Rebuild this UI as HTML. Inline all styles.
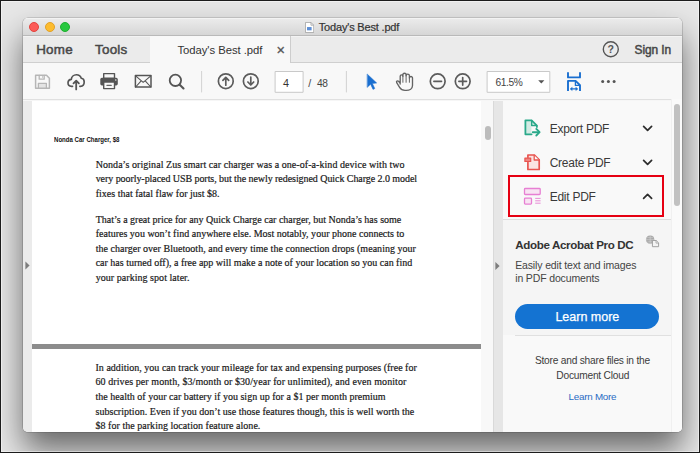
<!DOCTYPE html>
<html><head><meta charset="utf-8">
<style>
*{margin:0;padding:0;box-sizing:border-box}
html,body{width:700px;height:453px;overflow:hidden}
body{position:relative;font-family:"Liberation Sans",sans-serif;background:#e6e6e6;color:#333}
.abs{position:absolute}
#frame{position:absolute;left:0;top:0;width:700px;height:453px;border:1px solid #1c1c1c;z-index:50;pointer-events:none}
#frame::after{content:"";position:absolute;left:0;top:0;right:0;bottom:0;border:1px solid rgba(255,255,255,.45)}
#bg{position:absolute;left:0;top:0;width:700px;height:453px;background:#e7e7e7}
#win{position:absolute;left:23px;top:18px;width:659px;height:414px;border-radius:5px;overflow:hidden;background:#f6f6f6;box-shadow:0 0 0 0.6px rgba(0,0,0,.24),0 18px 32px 0 rgba(0,0,0,.55)}
#title{position:absolute;left:0;top:0;width:659px;height:18px;box-shadow:inset 0 1px 0 #f3f3f3;background:linear-gradient(#ececec,#d6d6d6);border-bottom:1px solid #b9b9b9}
.tl{position:absolute;top:4px;width:10px;height:10px;border-radius:50%}
#tabs{position:absolute;left:0;top:18px;width:659px;height:27.4px;background:#ebebeb;border-bottom:1px solid #cfcfcf;border-top:1px solid #f3f3f3}
#atab{position:absolute;left:127px;top:-1px;width:141px;height:28px;background:#f8f8f8;border-right:1px solid #cdcdcd}
#tool{position:absolute;left:0;top:45.4px;width:659px;height:37.1px;background:#f8f8f8;border-bottom:1.5px solid #e0e0e0}
.t{position:absolute;white-space:nowrap;line-height:1}
.pt{font-size:12px;letter-spacing:-0.26px;color:#3a3a3a}
.doc{position:absolute;white-space:nowrap;font-family:"Liberation Serif",serif;font-size:10px;line-height:1;color:#1a1a1a;-webkit-text-stroke:0.2px #1a1a1a}
</style></head><body>
<div id="bg"></div>
<div id="win">
  <div id="title">
    <div class="tl" style="left:6px;background:#fc5b57;border:0.5px solid #e2443f"></div>
    <div class="tl" style="left:21.5px;background:#fdbc2e;border:0.5px solid #e0a028"></div>
    <div class="tl" style="left:37px;background:#28c83f;border:0.5px solid #1eae2f"></div>
    <svg class="abs" style="left:281.7px;top:4px" width="9.2" height="11" viewBox="0 0 10 12"><path d="M0.5 0.5H6.5L9.5 3.5V11.5H0.5Z" fill="#fff" stroke="#9a9a9a" stroke-width="0.8"/><path d="M6.5 0.5V3.5H9.5" fill="none" stroke="#9a9a9a" stroke-width="0.8"/><rect x="2.2" y="5.5" width="5" height="3.6" fill="#5d8fd6"/></svg>
    <div class="t" style="left:295.8px;top:4.4px;font-size:11px;letter-spacing:-0.18px;color:#333;-webkit-text-stroke:0.2px #333">Today's Best .pdf</div>
  </div>
  <div id="tabs">
    <div class="t" style="left:13.2px;top:5.9px;font-size:13.4px;color:#484848;letter-spacing:0.25px;-webkit-text-stroke:0.5px #484848">Home</div>
    <div class="t" style="left:72px;top:5.9px;font-size:13.4px;color:#484848;letter-spacing:0.25px;-webkit-text-stroke:0.5px #484848">Tools</div>
    <div id="atab">
      <div class="t" style="left:27.4px;top:8.5px;font-size:11.3px;letter-spacing:-0.04px;color:#333">Today's Best .pdf</div>
      <div class="t" style="left:126.6px;top:7.3px;font-size:14.5px;color:#555;-webkit-text-stroke:0.3px #555">×</div>
    </div>
        <div class="t" style="left:611.6px;top:8.4px;font-size:11.9px;color:#484848;letter-spacing:-0.1px;-webkit-text-stroke:0.5px #484848">Sign In</div>
  </div>
  <div id="tool"></div>
  <svg class="abs" style="left:0;top:0" width="659" height="414" viewBox="23 18 659 414" fill="none" stroke-linecap="round" stroke-linejoin="round">
    <circle cx="610.8" cy="49.3" r="7.5" stroke="#555" stroke-width="1.4"/>
    <text x="610.8" y="53.3" text-anchor="middle" font-family="Liberation Sans, sans-serif" font-weight="bold" font-size="10.6" fill="#555" stroke="none">?</text>
        <!-- save -->
    <g stroke="#b6b6b6" stroke-width="1.5">
      <path d="M38.4 83.4H46.4V88.2H38.4Z" fill="#e4e4e4" stroke="none"/>
      <path d="M35.6 75.3H46.5L49.4 78.2V88.2H35.6Z"/>
      <path d="M39.2 75.5V79.2H44.2V75.5" stroke-width="1.3"/>
      <path d="M42.6 76.6V77.4" stroke-width="0.9"/>
      <path d="M38.4 88.1V83.3H46.4V88.1" stroke-width="1.3"/>
    </g>
    <!-- cloud -->
    <g stroke="#555" stroke-width="1.65">
      <path d="M72.6 86.3H71.5C69.4 86.3 68 84.7 68 82.8C68 80.8 69.5 79.5 71.3 79.4C71.5 76.6 73.7 74.7 76.4 74.7C78.7 74.7 80.6 76.1 81.3 78.2C83.2 78.4 84.2 80 84.2 82C84.2 84.5 82.6 86.3 80.5 86.3H79.8"/>
      <path d="M76.2 89.4V81M73.5 83.4L76.2 80.6L78.9 83.4" stroke-width="1.8"/>
    </g>
    <!-- printer -->
    <g>
      <rect x="100.3" y="77.8" width="17.5" height="7.6" rx="1.6" fill="#555"/>
      <rect x="103.7" y="73.6" width="10.8" height="4.6" fill="#f8f8f8" stroke="#555" stroke-width="1.4"/>
      <rect x="103.7" y="82" width="10.8" height="6.6" fill="#f8f8f8" stroke="#555" stroke-width="1.4"/>
      <path d="M106.9 85.3H111.3" stroke="#666" stroke-width="1.2"/>
      <circle cx="115.8" cy="80" r="0.7" fill="#f8f8f8"/>
    </g>
    <!-- mail -->
    <g stroke="#555" stroke-width="1.3">
      <rect x="135.4" y="75.6" width="15.6" height="11.5" stroke-width="1.5"/>
      <path d="M135.6 75.8L143.2 82.3L150.8 75.8M135.6 87L141.2 80.8M150.8 87L145.2 80.8" stroke-width="1.1"/>
    </g>
    <!-- search -->
    <g stroke="#555">
      <circle cx="175.4" cy="80.3" r="5.7" stroke-width="1.8"/>
      <path d="M179.7 84.7L183.5 88.5" stroke-width="2.1"/>
    </g>
    <path d="M201.6 71V92.4M346.4 71V92.4" stroke="#d2d2d2" stroke-width="1" stroke-linecap="butt"/>
    <!-- up / down -->
    <g stroke="#5c5c5c" stroke-width="1.7">
      <circle cx="225.8" cy="81.2" r="7.4"/>
      <path d="M225.8 85.2V77.8M222.9 80.4L225.8 77.4L228.7 80.4"/>
      <circle cx="250.8" cy="81.2" r="7.4"/>
      <path d="M250.8 77.2V84.6M247.9 82L250.8 85L253.7 82"/>
    </g>
    <rect x="275.5" y="71.5" width="27.6" height="20.8" fill="#fff" stroke="#c9c9c9" stroke-width="1"/>
    <text x="286" y="86.9" text-anchor="middle" font-family="Liberation Sans, sans-serif" font-size="10.8" fill="#333" stroke="none">4</text>
    <text x="308.2" y="86.9" font-family="Liberation Sans, sans-serif" font-size="10.8" fill="#444" stroke="none">/</text>
    <text x="317" y="86.7" font-family="Liberation Sans, sans-serif" font-size="10.2" letter-spacing="-0.4" fill="#444" stroke="none">48</text>
    <!-- cursor -->
    <path transform="translate(0.5,0.4)" d="M366.9 73.8L376.2 82.6L371.9 83.1L374.3 88.1L372.5 89L370.1 83.9L366.9 86.8Z" fill="#1a6fd0" stroke="#1a6fd0" stroke-width="0.5"/>
    <!-- hand -->
    <g stroke="#646464" stroke-width="1.35">
      <path d="M400.2 84V76.2A1.35 1.35 0 0 1 402.9 76.2V74.8A1.6 1.6 0 0 1 406.1 74.8V75.8A1.65 1.65 0 0 1 409.4 75.8V78A1.55 1.55 0 0 1 412.5 78V85.5C412.5 88.6 409.6 90.4 406.2 90.4H405C402.5 90.4 400.8 89.4 399.6 87.4L396.7 82.7C396 81.4 397.5 80.2 398.6 81.3L400.2 83.2"/>
      <path d="M402.9 76.2V82.3M406.1 75.8V82.3M409.4 78V82.3" stroke-width="1"/>
    </g>
    <!-- zoom -/+ -->
    <g stroke="#5c5c5c" stroke-width="1.7">
      <circle cx="437.7" cy="81.3" r="7.4"/>
      <path d="M433.9 81.3H441.5"/>
      <circle cx="462.7" cy="81.3" r="7.4"/>
      <path d="M458.9 81.3H466.5M462.7 77.5V85.1"/>
    </g>
    <rect x="487.5" y="71.5" width="62.3" height="20.8" fill="#fff" stroke="#c9c9c9" stroke-width="1"/>
    <text x="495.4" y="86.1" font-family="Liberation Sans, sans-serif" font-size="10.2" letter-spacing="-0.35" fill="#444" stroke="none">61.5%</text>
    <path d="M538.2 80.3H544.4L541.3 83.6Z" fill="#555" stroke="none"/>
    <!-- fit -->
    <g stroke="#1a6fd0" stroke-width="1.9" stroke-linecap="butt" stroke-linejoin="round">
      <path d="M568 72.2V77.4H580V72.2"/>
      <path d="M568 91V80.9H575.6L580 85.2V91"/>
      <path d="M575.4 81.2V85.4H579.8" stroke-width="1.3"/>
      <path d="M571.4 88.9H576.6" stroke-width="1.1"/>
      <path d="M570 88.9L572.2 87.2V90.6ZM578 88.9L575.8 87.2V90.6Z" fill="#1a6fd0" stroke-width="0.4"/>
    </g>
    <g fill="#555" stroke="none"><circle cx="602.7" cy="81.4" r="1.5"/><circle cx="608.4" cy="81.4" r="1.5"/><circle cx="614.1" cy="81.4" r="1.5"/></g>
  </svg>
  <div id="content" class="abs" style="left:0;top:82.5px;width:659px;height:332px;background:#e9e9e9">
    <div class="abs" style="left:0;top:0;width:9.4px;height:333px;background:#ebebeb"></div>
    <div class="abs" style="left:9.4px;top:0;width:449px;height:244px;background:#fff"></div>
    <div class="abs" style="left:9.4px;top:243.8px;width:449px;height:5px;background:#8c8c8c"></div>
    <div class="abs" style="left:9.4px;top:248.8px;width:449px;height:84px;background:#fff"></div>
    <div class="abs" style="left:458.4px;top:0;width:11.6px;height:333px;background:#f8f8f8"></div>
    <div class="abs" style="left:461.7px;top:25.2px;width:6.3px;height:14.2px;border-radius:3.2px;background:#bcbcbc"></div>
    <div class="abs" style="left:470px;top:0;width:10px;height:333px;background:#e6e6e6;border-left:1px solid #d9d9d9"></div>
    <div class="abs" style="left:480px;top:0;width:179px;height:333px;background:#f9f9f9"></div>
  </div>
<!--PANEL-->
<div class="abs" style="left:480px;top:201px;width:168px;height:116px;background:#f5f5f5;border-top:1px solid #dedede"></div>
<div class="abs" style="left:492px;top:316.6px;width:156px;height:1.6px;background:#e0e0e0"></div>
<div class="abs" style="left:648px;top:81px;width:11px;height:333px;background:#fafafa;border-left:1px solid #f0f0f0"></div>
<div class="abs" style="left:651px;top:85.5px;width:5.5px;height:102.6px;border-radius:3px;background:#c1c1c1"></div>
<div class="abs" style="left:485.1px;top:157.2px;width:156.1px;height:41.5px;border:2px solid #e60012"></div>
<svg class="abs" style="left:0;top:0" width="659" height="414" viewBox="23 18 659 414" fill="none" stroke-linecap="round" stroke-linejoin="round">
  <!-- export -->
  <g stroke="#2aa98a" stroke-width="1.8">
    <path d="M525.4 120.3H531.4V134.3H525.4Z" fill="#d3ebe4" stroke="none"/>
    <path d="M531.6 134.3H525.4V120.3H531.6L536.9 125.6V127"/>
    <path d="M531.7 120.6V125.6H536.6" stroke-width="1.5"/>
    <path d="M532.8 132.2H538.6" stroke-width="1.9"/><path d="M536.3 128.9L539.6 132.2L536.3 135.5" stroke-width="1.9"/>
  </g>
  <!-- create -->
  <g stroke="#e8544f" stroke-width="1.7">
    <path d="M527.9 157.2V155H534.4L539.2 159.8V169.5H527.9V162.4" fill="#fbe3e1"/>
    <path d="M534.2 155.2V160H539" fill="#f9f9f9" stroke-width="1.3"/>
    <rect x="524.9" y="158.1" width="5.8" height="3.4" fill="#ef8480" stroke-width="1.2"/>
  </g>
  <!-- edit -->
  <g stroke="#e77fd3" stroke-width="1.3">
    <rect x="524.5" y="188.5" width="15.7" height="6" rx="0.8" fill="#f8e4f3"/>
    <rect x="524.5" y="198.1" width="7" height="6" rx="0.8" fill="#f8e4f3"/>
    <path d="M535.2 198.4H540.6M535.2 200.8H540.6M535.2 203.2H540.6" stroke-width="0.9" stroke-linecap="butt"/>
  </g>
  <g stroke="#2d2d2d" stroke-width="1.7">
    <path d="M643.6 126.4L647.6 130.4L651.6 126.4"/>
    <path d="M643.6 160.4L647.6 164.4L651.6 160.4"/>
    <path d="M643.6 198.4L647.6 194.4L651.6 198.4"/>
  </g>
  <!-- globe+doc -->
  <circle cx="650.2" cy="239.7" r="4.1" fill="#a9a9a9"/>
  <path d="M650.2 235.6V243.8M646.1 239.7H654.3M647.4 237.2C649 238 651.4 238 653 237.2M647.4 242.2C649 241.4 651.4 241.4 653 242.2" stroke="#d4d4d4" stroke-width="0.6"/>
  <path d="M652.8 240.5H656.2L658.6 242.9V246.7H652.8Z" fill="#f4f4f4" stroke="#a2a2a2" stroke-width="1"/>
  <path d="M656 240.7V243.1H658.4" stroke="#a2a2a2" stroke-width="0.8"/>
  <!-- panel arrows -->
  <path d="M25.4 261.4L29.6 265.4L25.4 269.4Z" fill="#7d7d7d"/>
  <path d="M495.4 262L499.6 266L495.4 270Z" fill="#7d7d7d"/>
</svg>
<div class="t pt" style="left:526.7px;top:104.6px">Export PDF</div>
<div class="t pt" style="left:526.7px;top:139px">Create PDF</div>
<div class="t pt" style="left:526.7px;top:173.3px">Edit PDF</div>
<div class="t" style="left:492.2px;top:221.1px;font-size:11.6px;font-weight:bold;color:#333;letter-spacing:-0.35px">Adobe Acrobat Pro DC</div>
<div class="t" style="left:492.2px;top:241.6px;font-size:10.5px;letter-spacing:-0.14px;color:#444">Easily edit text and images</div>
<div class="t" style="left:492.2px;top:254.8px;font-size:10.5px;letter-spacing:-0.14px;color:#444">in PDF documents</div>
<div class="abs" style="left:492.2px;top:285.8px;width:144.2px;height:25.2px;border-radius:13px;background:#1473d2"></div>
<div class="t" style="left:532.4px;top:293.2px;font-size:12.5px;color:#fff;-webkit-text-stroke:0.25px #fff">Learn more</div>
<div class="t" style="left:511.9px;top:337.8px;font-size:10.2px;letter-spacing:-0.22px;color:#3c3c3c">Store and share files in the</div>
<div class="t" style="left:533.3px;top:352.5px;font-size:10.2px;letter-spacing:-0.22px;color:#3c3c3c">Document Cloud</div>
<div class="t" style="left:545.6px;top:374px;font-size:9.8px;letter-spacing:-0.24px;color:#2a6cc4">Learn More</div>
<!--/PANEL-->
<!--DOC-->
<div class="t" style="left:30.7px;top:117.5px;font-size:7.5px;font-weight:bold;color:#111;transform-origin:0 0;transform:scaleX(0.81)" id="hd">Nonda Car Charger, $8</div>
<div class="doc" style="left:72.7px;top:142.0px;letter-spacing:0.054px">Nonda’s original Zus smart car charger was a one-of-a-kind device with two</div>
<div class="doc" style="left:72.7px;top:156.4px;letter-spacing:-0.063px">very poorly-placed USB ports, but the newly redesigned Quick Charge 2.0 model</div>
<div class="doc" style="left:72.7px;top:171.0px;letter-spacing:0.009px">fixes that fatal flaw for just $8.</div>
<div class="doc" style="left:72.7px;top:196.5px;letter-spacing:-0.003px">That’s a great price for any Quick Charge car charger, but Nonda’s has some</div>
<div class="doc" style="left:72.7px;top:211.0px;letter-spacing:0.004px">features you won’t find anywhere else. Most notably, your phone connects to</div>
<div class="doc" style="left:72.7px;top:225.6px;letter-spacing:0.029px">the charger over Bluetooth, and every time the connection drops (meaning your</div>
<div class="doc" style="left:72.7px;top:240.2px;letter-spacing:-0.005px">car has turned off), a free app will make a note of your location so you can find</div>
<div class="doc" style="left:72.7px;top:254.7px;letter-spacing:0.043px">your parking spot later.</div>
<div class="doc" style="left:72.5px;top:344.5px;letter-spacing:0.018px">In addition, you can track your mileage for tax and expensing purposes (free for</div>
<div class="doc" style="left:72.5px;top:359.3px;letter-spacing:0.077px">60 drives per month, $3/month or $30/year for unlimited), and even monitor</div>
<div class="doc" style="left:72.5px;top:374.0px;letter-spacing:0.015px">the health of your car battery if you sign up for a $1 per month premium</div>
<div class="doc" style="left:72.5px;top:388.7px;letter-spacing:0.026px">subscription. Even if you don’t use those features though, this is well worth the</div>
<div class="doc" style="left:72.5px;top:403.4px;letter-spacing:0.032px">$8 for the parking location feature alone.</div>
<!--/DOC-->
</div>
<div id="frame"></div>
</body></html>
